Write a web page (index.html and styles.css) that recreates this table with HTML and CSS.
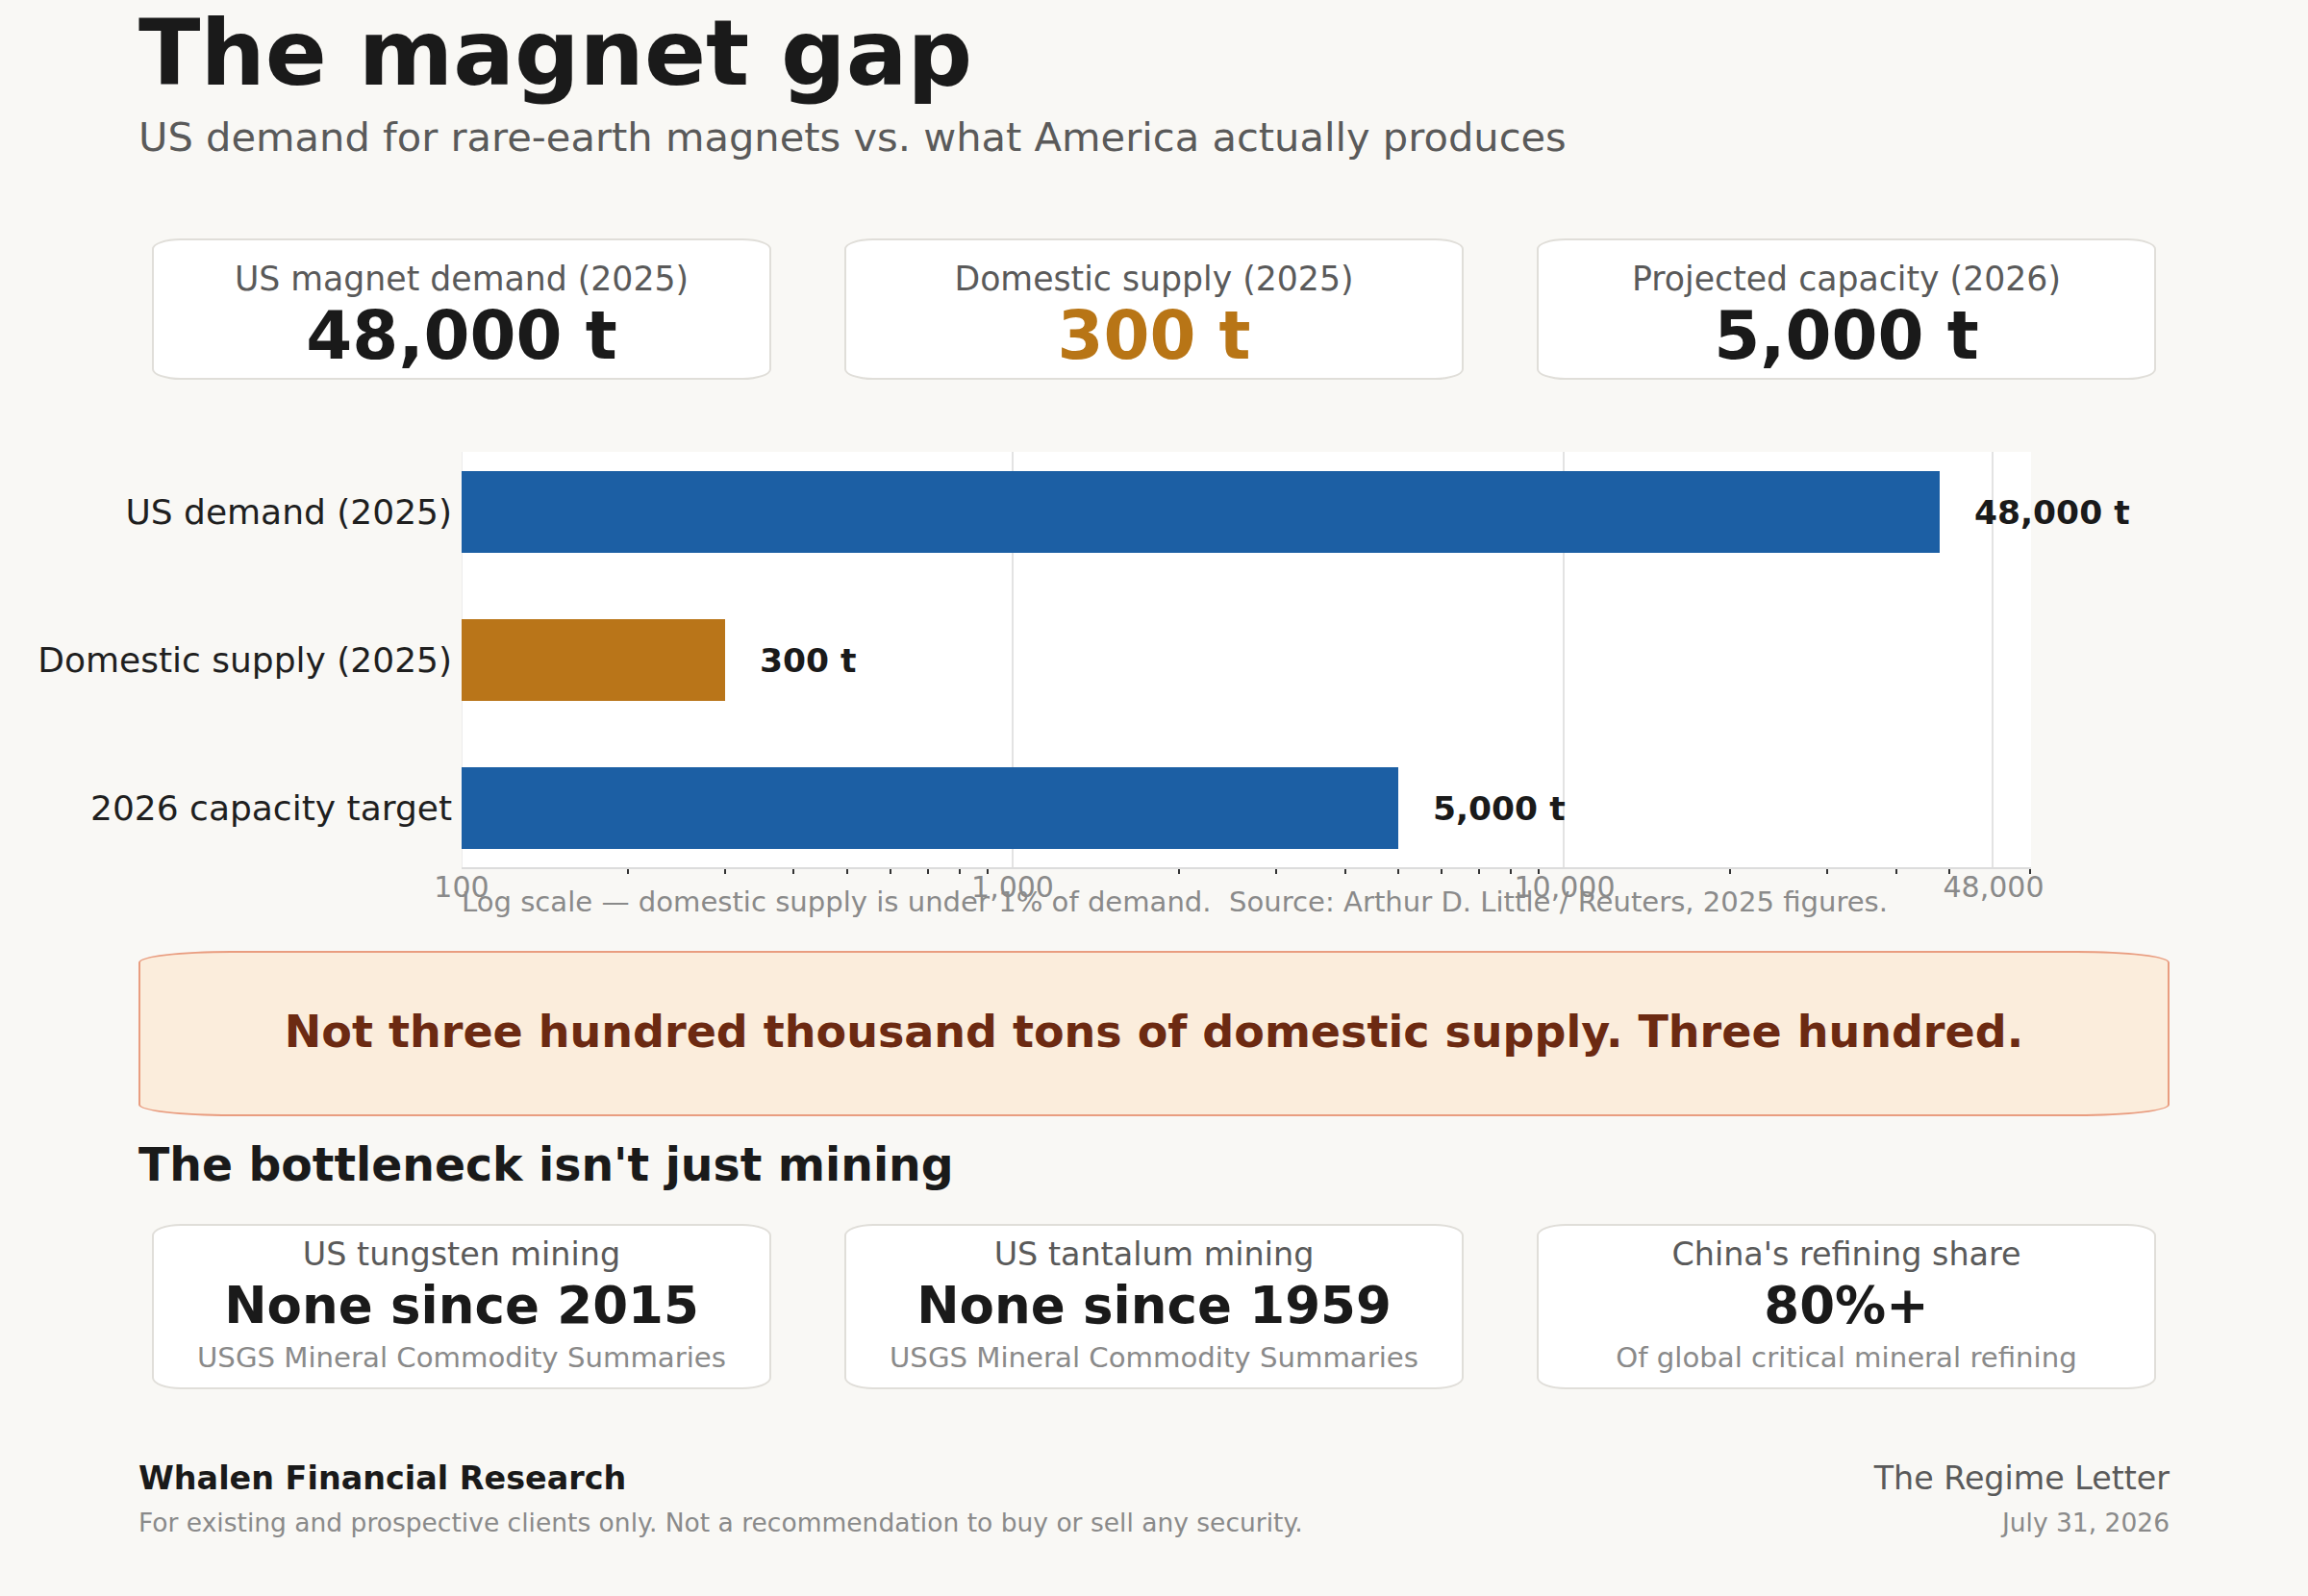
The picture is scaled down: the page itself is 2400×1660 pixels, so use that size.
FILE: index.html
```html
<!DOCTYPE html>
<html lang="en">
<head>
<meta charset="utf-8">
<title>The magnet gap</title>
<link rel="stylesheet" href="styles.css">
</head>
<body>
<main class="page">
  <header class="head">
    <h1 class="title">The magnet gap</h1>
    <p class="subtitle">US demand for rare-earth magnets vs. what America actually produces</p>
  </header>

  <section class="kpis">
    <div class="kpi">
      <div class="kpi-label">US magnet demand (2025)</div>
      <div class="kpi-value">48,000 t</div>
    </div>
    <div class="kpi">
      <div class="kpi-label">Domestic supply (2025)</div>
      <div class="kpi-value kpi-value--accent">300 t</div>
    </div>
    <div class="kpi">
      <div class="kpi-label">Projected capacity (2026)</div>
      <div class="kpi-value">5,000 t</div>
    </div>
  </section>

  <section class="chart">
    <div class="chart-body">
      <div class="ylabels">
        <div class="ylabel">US demand (2025)</div>
        <div class="ylabel">Domestic supply (2025)</div>
        <div class="ylabel">2026 capacity target</div>
      </div>
      <div class="plot">
        <span class="grid grid--edge" style="left:0px"></span>
        <span class="grid" style="left:573px"></span>
        <span class="grid" style="left:1146px"></span>
        <span class="grid" style="left:1592px"></span>
        <div class="bars">
          <div class="bar-row">
            <div class="bar bar--blue" style="width:1537px"></div>
            <span class="bar-value">48,000 t</span>
          </div>
          <div class="bar-row">
            <div class="bar bar--amber" style="width:274px"></div>
            <span class="bar-value">300 t</span>
          </div>
          <div class="bar-row">
            <div class="bar bar--blue" style="width:974px"></div>
            <span class="bar-value">5,000 t</span>
          </div>
        </div>
      </div>
    </div>
    <div class="xaxis">
      <span class="tick" style="left:172.6px"></span>
      <span class="tick" style="left:273.5px"></span>
      <span class="tick" style="left:345.2px"></span>
      <span class="tick" style="left:400.7px"></span>
      <span class="tick" style="left:446.1px"></span>
      <span class="tick" style="left:484.5px"></span>
      <span class="tick" style="left:517.7px"></span>
      <span class="tick" style="left:547.1px"></span>
      <span class="tick" style="left:745.9px"></span>
      <span class="tick" style="left:846.9px"></span>
      <span class="tick" style="left:918.5px"></span>
      <span class="tick" style="left:974px"></span>
      <span class="tick" style="left:1019.4px"></span>
      <span class="tick" style="left:1057.8px"></span>
      <span class="tick" style="left:1091px"></span>
      <span class="tick" style="left:1120.4px"></span>
      <span class="tick" style="left:1319.2px"></span>
      <span class="tick" style="left:1420.2px"></span>
      <span class="tick" style="left:1491.8px"></span>
      <span class="tick" style="left:1547.3px"></span>
      <span class="tick" style="left:1631px"></span>
      <span class="tick-label" style="left:0px">100</span>
      <span class="tick-label" style="left:573px">1,000</span>
      <span class="tick-label" style="left:1147px">10,000</span>
      <span class="tick-label" style="left:1593px">48,000</span>
    </div>
    <p class="caption">Log scale — domestic supply is under 1% of demand.  Source: Arthur D. Little / Reuters, 2025 figures.</p>
  </section>

  <section class="callout">
    <p class="callout-text">Not three hundred thousand tons of domestic supply. Three hundred.</p>
  </section>

  <h2 class="section-title">The bottleneck isn't just mining</h2>

  <section class="facts">
    <div class="fact">
      <div class="fact-label">US tungsten mining</div>
      <div class="fact-value">None since 2015</div>
      <div class="fact-source">USGS Mineral Commodity Summaries</div>
    </div>
    <div class="fact">
      <div class="fact-label">US tantalum mining</div>
      <div class="fact-value">None since 1959</div>
      <div class="fact-source">USGS Mineral Commodity Summaries</div>
    </div>
    <div class="fact">
      <div class="fact-label">China's refining share</div>
      <div class="fact-value">80%+</div>
      <div class="fact-source">Of global critical mineral refining</div>
    </div>
  </section>

  <footer class="footer">
    <div class="footer-left">
      <div class="brand">Whalen Financial Research</div>
      <div class="disclaimer">For existing and prospective clients only. Not a recommendation to buy or sell any security.</div>
    </div>
    <div class="footer-right">
      <div class="letter">The Regime Letter</div>
      <div class="date">July 31, 2026</div>
    </div>
  </footer>
</main>
</body>
</html>
```

FILE: styles.css
```css
* {
  box-sizing: border-box;
}

html,
body {
  margin: 0;
  padding: 0;
  background: #f9f8f5;
}

body {
  font-family: "DejaVu Sans", "Noto Sans", sans-serif;
  color: #1a1a1a;
}

.page {
  width: 2400px;
  padding: 2px 144px 0;
}

/* ---------- header ---------- */
.title {
  margin: 0;
  font-size: 94.5px;
  line-height: 106px;
  font-weight: 700;
  color: #1a1a1a;
}

.subtitle {
  margin: 11px 0 0;
  font-size: 41.6px;
  line-height: 48px;
  color: #5a5a5a;
}

/* ---------- KPI cards ---------- */
.kpis {
  margin-top: 81px;
  padding: 0 14px;
  display: grid;
  grid-template-columns: repeat(3, 1fr);
  gap: 76px;
}

.kpi {
  background: #ffffff;
  border: 2px solid #e0ded9;
  border-radius: 30px / 11px;
  padding: 19px 10px 6px;
  text-align: center;
}

.kpi-label {
  font-size: 34.7px;
  line-height: 42px;
  color: #5a5a5a;
}

.kpi-value {
  font-size: 69px;
  line-height: 76px;
  font-weight: 700;
  color: #1a1a1a;
}

.kpi-value--accent {
  color: #b87516;
}

/* ---------- chart ---------- */
.chart {
  margin-top: 75px;
}

.chart-body {
  display: flex;
}

.ylabels {
  width: 326px;
  margin-right: 10px;
  padding: 20px 0 19px;
  display: flex;
  flex-direction: column;
  gap: 69px;
}

.ylabel {
  height: 85px;
  display: flex;
  align-items: center;
  justify-content: flex-end;
  white-space: nowrap;
  font-size: 36px;
  color: #1f1f1f;
}

.plot {
  position: relative;
  width: 1632px;
  height: 432px;
  background: #ffffff;
}

.grid {
  position: absolute;
  top: 0;
  bottom: 0;
  width: 2px;
  margin-left: -1px;
  background: #e3e3e3;
}

.grid--edge {
  width: 1px;
  margin-left: 0;
  background: #ececec;
}

.bars {
  position: relative;
  padding: 20px 0 19px;
  display: flex;
  flex-direction: column;
  gap: 69px;
}

.bar-row {
  height: 85px;
  display: flex;
  align-items: center;
  gap: 36px;
}

.bar {
  height: 85px;
  flex: none;
}

.bar--blue {
  background: #1c5fa4;
}

.bar--amber {
  background: #b97519;
}

.bar-value {
  font-size: 34.5px;
  font-weight: 700;
  color: #1a1a1a;
  white-space: nowrap;
}

.xaxis {
  position: relative;
  margin-left: 336px;
  width: 1632px;
  height: 19px;
  border-top: 2px solid #dcdcdc;
}

.tick {
  position: absolute;
  top: 0;
  width: 2px;
  height: 5px;
  margin-left: -1px;
  background: #333333;
}

.tick-label {
  position: absolute;
  top: 1px;
  transform: translateX(-50%);
  font-size: 30px;
  line-height: normal;
  color: #8a8a8a;
  white-space: nowrap;
}

.caption {
  margin: 0 0 0 336px;
  font-size: 29.1px;
  line-height: normal;
  color: #8a8a8a;
  white-space: pre;
}

/* ---------- callout ---------- */
.callout {
  margin-top: 34px;
  background: #fbeddc;
  border: 2px solid #e99d80;
  border-radius: 96px / 12px;
  padding: 55px 20px 59px;
  text-align: center;
}

.callout-text {
  margin: 0;
  font-size: 46px;
  line-height: normal;
  font-weight: 700;
  color: #6c2a12;
}

/* ---------- facts ---------- */
.section-title {
  margin: 23px 0 0;
  font-size: 47.3px;
  line-height: normal;
  font-weight: 700;
  color: #1a1a1a;
}

.facts {
  margin-top: 34px;
  padding: 0 14px;
  display: grid;
  grid-template-columns: repeat(3, 1fr);
  gap: 76px;
}

.fact {
  background: #ffffff;
  border: 2px solid #e0ded9;
  border-radius: 30px / 12px;
  padding: 10px 10px 13px;
  text-align: center;
}

.fact-label {
  font-size: 33.4px;
  line-height: 40px;
  color: #5a5a5a;
}

.fact-value {
  font-size: 53px;
  line-height: 66px;
  font-weight: 700;
  color: #1a1a1a;
}

.fact-source {
  margin-top: 3px;
  font-size: 29.2px;
  line-height: 36px;
  color: #8a8a8a;
}

/* ---------- footer ---------- */
.footer {
  margin-top: 73px;
  display: flex;
  justify-content: space-between;
  align-items: flex-start;
}

.brand {
  font-size: 33.4px;
  line-height: normal;
  font-weight: 700;
  color: #1a1a1a;
}

.letter {
  font-size: 33.3px;
  line-height: normal;
  color: #5a5a5a;
  text-align: right;
}

.disclaimer,
.date {
  margin-top: 11px;
  font-size: 26.5px;
  line-height: normal;
  color: #8a8a8a;
}

.date {
  text-align: right;
}
```
